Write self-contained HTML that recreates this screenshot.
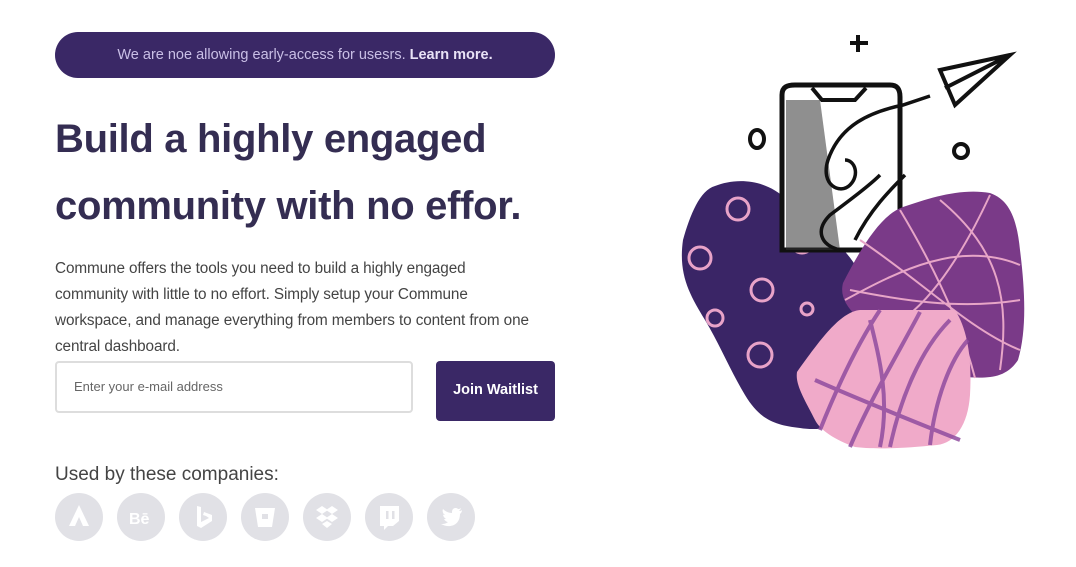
<!DOCTYPE html>
<html><head><meta charset="utf-8"><style>
*{margin:0;padding:0;box-sizing:border-box}
body{width:1076px;height:567px;background:#fff;font-family:"Liberation Sans",sans-serif;position:relative;overflow:hidden}
.banner{position:absolute;left:55px;top:32px;width:500px;height:46px;border-radius:23px;background:#3a2866;color:#c9bfe6;font-size:14.5px;text-align:center;line-height:47px}
.banner b{color:#e8e2f6}
h1{position:absolute;left:55px;top:106px;font-size:40px;line-height:67px;color:#342d52;font-weight:bold;letter-spacing:-0.3px;width:540px}
p{position:absolute;left:55px;top:256px;width:480px;font-size:15.3px;line-height:26px;color:#444;letter-spacing:-0.1px}
.inp{position:absolute;left:55px;top:361px;width:358px;height:52px;border:2px solid #ddd;border-radius:4px;font-size:13px;color:#666;padding:16px 17px}
.btn{position:absolute;left:436px;top:361px;width:119px;height:60px;border-radius:4px;background:#3a2866;color:#fff;font-weight:bold;font-size:14.5px;text-align:center;line-height:58px}
.used{position:absolute;left:55px;top:464px;font-size:19px;color:#444}
.ic{position:absolute;top:493px;width:48px;height:48px;border-radius:50%;background:#e1e1e6}
.ic svg{width:48px;height:48px}
</style></head><body>
<div class="banner">We are noe allowing early-access for usesrs. <b>Learn more.</b></div>
<h1>Build a highly engaged community with no effor.</h1>
<p>Commune offers the tools you need to build a highly engaged community with little to no effort. Simply setup your Commune workspace, and manage everything from members to content from one central dashboard.</p>
<div class="inp">Enter your e-mail address</div>
<div class="btn">Join Waitlist</div>
<div class="used">Used by these companies:</div>
<div class="ic" style="left:55px"><svg viewBox="0 0 48 48"><path d="M24 12 L34 33 L28 33 L24 24 L20 33 L14 33Z" fill="#fff"/></svg></div>
<div class="ic" style="left:117px"><svg viewBox="0 0 48 48"><text x="12" y="31" font-family="Liberation Sans" font-weight="bold" font-size="16" fill="#fff">Bē</text></svg></div>
<div class="ic" style="left:179px"><svg viewBox="0 0 48 48"><path d="M18 13 L22 14 L22 29 L30 25 L27 23 L24 22 L25 19 L33 22 L33 28 L22 35 L18 33Z" fill="#fff"/></svg></div>
<div class="ic" style="left:241px"><svg viewBox="0 0 48 48"><path d="M14 15 L34 15 L31 34 L17 34Z" fill="#fff"/><rect x="21" y="21" width="6" height="5" fill="#e1e1e6"/></svg></div>
<div class="ic" style="left:303px"><svg viewBox="0 0 48 48"><path d="M19 13 L25 17 L19 21 L13 17Z M29 13 L35 17 L29 21 L23 17Z M19 21 L25 25 L19 29 L13 25Z M29 21 L35 25 L29 29 L23 25Z M19 31 L24 28 L29 31 L24 35Z" fill="#fff"/></svg></div>
<div class="ic" style="left:365px"><svg viewBox="0 0 48 48"><path d="M15 13 L34 13 L34 28 L28 33 L23 33 L19 37 L19 33 L15 33Z" fill="#fff"/><rect x="21" y="18" width="2.5" height="8" fill="#e1e1e6"/><rect x="27" y="18" width="2.5" height="8" fill="#e1e1e6"/></svg></div>
<div class="ic" style="left:427px"><svg viewBox="0 0 48 48"><path d="M35 17 C34 18 33 18 32 18 C33 17 34 16 34 15 C33 16 32 16 31 16 C29 14 25 15 25 19 L25 20 C21 20 18 18 16 16 C15 18 16 21 18 22 C17 22 16 22 16 21 C16 24 18 25 19 26 L17 26 C18 28 20 29 21 29 C19 31 16 31 14 31 C23 36 33 32 33 21 C34 20 35 19 35 17Z" fill="#fff"/></svg></div>
<svg style="position:absolute;left:0;top:0" width="1076" height="567" viewBox="0 0 1076 567">
<path d="M683 240 C690 215 700 190 715 186 C735 178 765 178 787 200 C815 225 845 245 858 270 C868 330 870 380 862 400 C850 425 825 432 800 428 C775 425 760 420 745 395 C730 370 720 345 705 320 C690 295 678 275 683 240Z" fill="#3a2566"/>
<g fill="none" stroke="#e8a3c8" stroke-width="3">
<circle cx="738" cy="209" r="11"/><circle cx="700" cy="258" r="11"/><circle cx="762" cy="290" r="11"/><circle cx="715" cy="318" r="8"/><circle cx="760" cy="355" r="12"/><circle cx="807" cy="309" r="6"/><circle cx="828" cy="347" r="8"/><circle cx="802" cy="242" r="11"/></g>
<path d="M782 95 C782 87 787 85 795 85 L890 85 C898 85 900 90 900 97 L900 250 L782 250Z" fill="#fff" stroke="#111" stroke-width="5"/>
<path d="M786 100 L820 100 L840 250 L786 250Z" fill="#333" opacity="0.55"/>
<path d="M812 88 L822 100 L855 100 L866 88" fill="none" stroke="#111" stroke-width="4"/>
<path d="M930 96 L903 105 C870 112 840 125 828 160 C820 185 840 195 850 185 C860 175 855 160 845 160 M880 175 C870 185 850 200 830 215 C815 230 820 245 840 250 M905 175 C890 190 870 210 855 240" fill="none" stroke="#111" stroke-width="3.5"/>
<path d="M940 70 L1010 55 L955 105Z M940 70 L1010 55 L945 88" fill="#fff" stroke="#111" stroke-width="4"/>
<path d="M858 35 L858 52 M850 43 L868 43" stroke="#111" stroke-width="4"/>
<ellipse cx="757" cy="139" rx="7" ry="9" fill="none" stroke="#111" stroke-width="4"/>
<circle cx="961" cy="151" r="7" fill="none" stroke="#111" stroke-width="4"/>
<path d="M843 283 C860 250 880 215 903 207 C930 198 960 188 990 193 C1010 200 1017 220 1020 250 C1025 290 1027 330 1018 360 C1005 380 985 378 963 377 C940 370 925 345 910 320 C890 312 870 318 857 317 C845 305 840 295 843 283Z" fill="#7a3a88"/>
<g fill="none" stroke="#e7a5c7" stroke-width="2"><path d="M845 300 C900 270 960 240 1020 265 M860 240 C920 280 970 330 1020 350 M900 210 C930 260 960 320 975 378 M990 195 C960 260 920 320 880 330 M850 290 C900 300 960 310 1020 300 M940 200 C1000 250 1010 300 1000 370"/></g>
<path d="M797 372 C820 340 840 312 860 310 L955 310 C968 330 972 360 970 395 C968 425 955 443 937 445 C900 449 870 449 855 447 C835 440 820 430 815 420 C805 400 795 385 797 372Z" fill="#f0aac9"/>
<g fill="none" stroke="#8f4c9f" stroke-width="4" opacity="0.85"><path d="M820 430 C840 380 860 340 880 310 M850 447 C870 400 900 350 920 312 M890 447 C900 400 920 350 950 320 M930 445 C935 400 950 360 968 340 M815 380 C860 400 910 420 960 440 M870 320 C880 360 890 400 880 447"/></g>
</svg>
</body></html>
